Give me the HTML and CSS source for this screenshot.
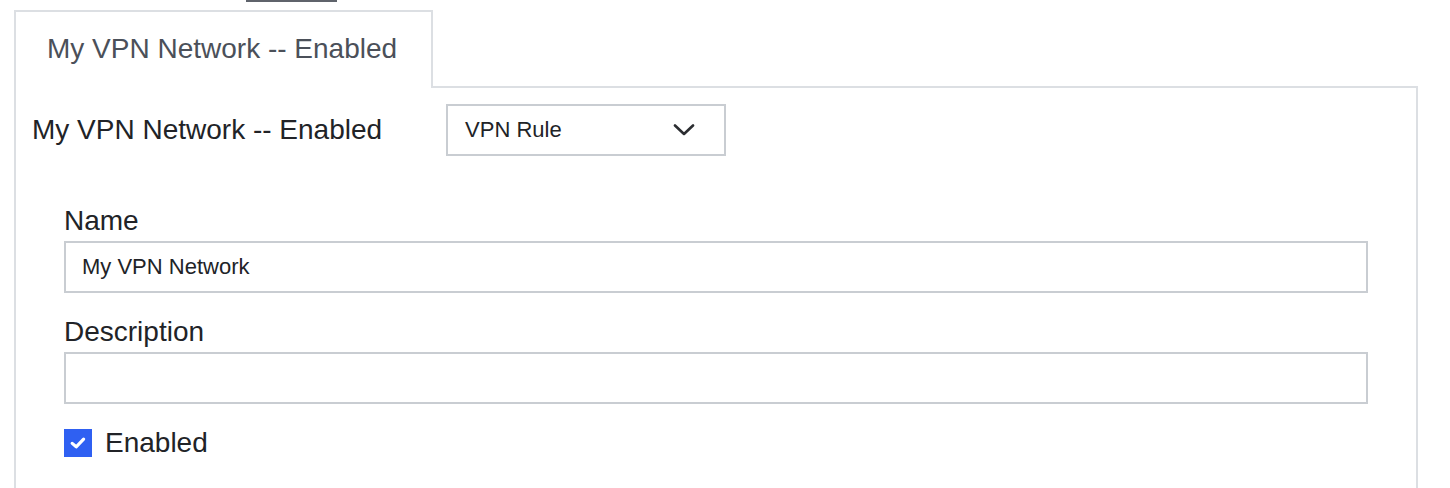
FILE: index.html
```html
<!DOCTYPE html>
<html lang="en">
<head>
<meta charset="utf-8">
<title>VPN Network</title>
<link rel="stylesheet" href="styles.css">
</head>
<body>
  <div class="topbar"></div>
  <div class="tabs">
    <div class="tab">My VPN Network -- Enabled</div>
    <div class="tab-filler"></div>
  </div>
  <div class="panel">
    <div class="panel-head">
      <h2 class="panel-title">My VPN Network -- Enabled</h2>
      <div class="select">
        <span class="select-value">VPN Rule</span>
        <svg class="chevron" width="22" height="12" viewBox="0 0 22 12" aria-hidden="true">
          <path d="M2 1.5 L11 10 L20 1.5" fill="none" stroke="#2b2d31" stroke-width="2.6" stroke-linecap="round" stroke-linejoin="round"/>
        </svg>
      </div>
    </div>
    <div class="form">
      <div class="field">
        <label class="field-label">Name</label>
        <div class="input">My VPN Network</div>
      </div>
      <div class="field">
        <label class="field-label">Description</label>
        <div class="input"></div>
      </div>
      <div class="check-row">
        <span class="checkbox">
          <svg width="18" height="18" viewBox="0 0 18 18" aria-hidden="true">
            <path d="M3.2 9.4 L7.2 12.8 L14.6 5.2" fill="none" stroke="#fff" stroke-width="3.2" stroke-linecap="round" stroke-linejoin="round"/>
          </svg>
        </span>
        <span class="check-label">Enabled</span>
      </div>
    </div>
  </div>
</body>
</html>
```

FILE: styles.css
```css
* { box-sizing: border-box; }

html, body {
  margin: 0;
  padding: 0;
  background: #ffffff;
  font-family: "Liberation Sans", Arial, Helvetica, sans-serif;
  color: #212327;
}

.topbar {
  width: 91px;
  height: 2px;
  margin-left: 246px;
  background: #5f636b;
}

.tabs {
  display: flex;
  margin-top: 8px;
  margin-left: 14px;
  margin-right: 32px;
}

.tab {
  border: 2px solid #dcdfe3;
  border-bottom: none;
  padding: 21px 34px 23px 31px;
  font-size: 28px;
  line-height: 32px;
  color: #4b5059;
  background: #ffffff;
  white-space: nowrap;
}

.tab-filler {
  flex: 1;
  border-bottom: 2px solid #dcdfe3;
}

.panel {
  margin-left: 14px;
  margin-right: 32px;
  border: 2px solid #dcdfe3;
  border-top: none;
  padding: 16px 16px 40px 16px;
}

.panel-head {
  display: flex;
  align-items: center;
  gap: 64px;
}

.panel-title {
  margin: 0;
  font-size: 28px;
  line-height: 32px;
  font-weight: normal;
  color: #212327;
  white-space: nowrap;
}

.select {
  width: 280px;
  height: 52px;
  border: 2px solid #c9cdd2;
  display: flex;
  align-items: center;
  justify-content: space-between;
  padding: 0 29px 0 17px;
  font-size: 22px;
  color: #212327;
}

.chevron { display: block; }

.form {
  padding: 49px 32px 0 32px;
}

.field {
  display: flex;
  flex-direction: column;
  gap: 4px;
  margin-bottom: 23px;
}

.field-label {
  font-size: 28px;
  line-height: 32px;
  color: #212327;
}

.input {
  height: 52px;
  border: 2px solid #c9cdd2;
  padding: 0 16px;
  display: flex;
  align-items: center;
  font-size: 22px;
  color: #212327;
}

.check-row {
  display: flex;
  align-items: center;
  gap: 13px;
}

.checkbox {
  width: 28px;
  height: 28px;
  background: #2f60f2;
  display: flex;
  align-items: center;
  justify-content: center;
}

.checkbox svg { display: block; }

.check-label {
  font-size: 28px;
  line-height: 32px;
  color: #212327;
}
```
